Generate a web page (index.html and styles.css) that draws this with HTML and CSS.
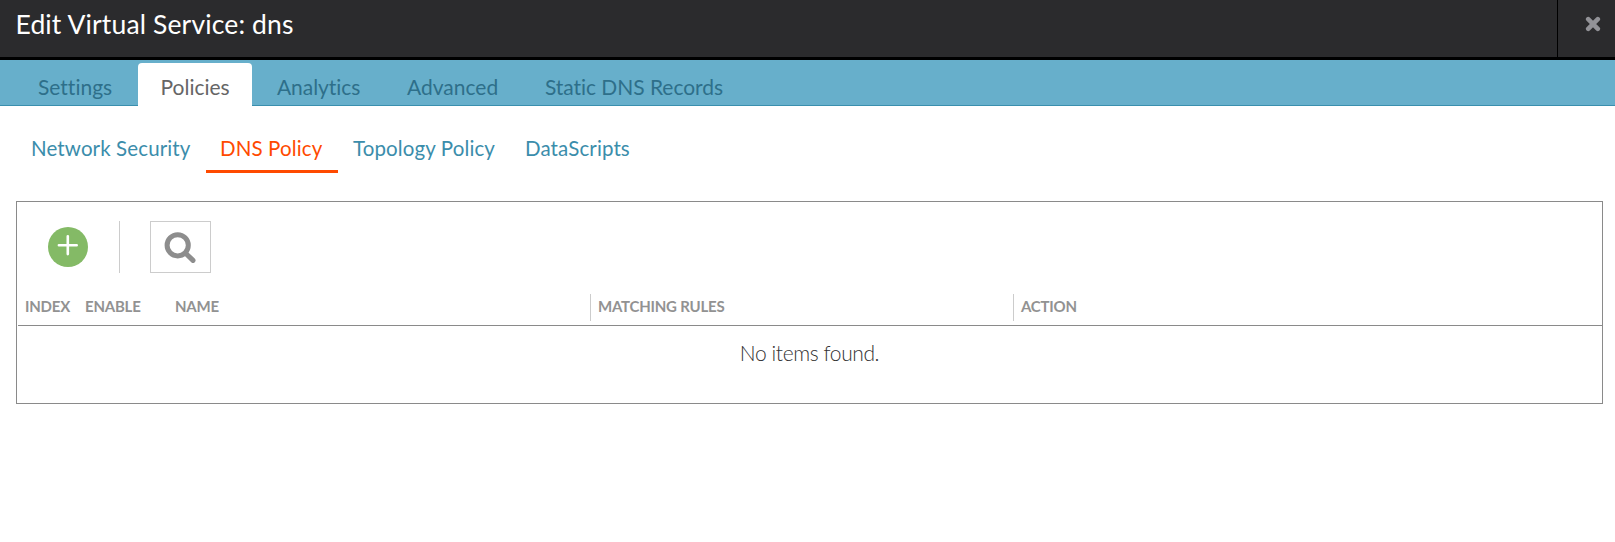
FILE: index.html
```html
<!DOCTYPE html>
<html lang="en">
<head>
<meta charset="utf-8">
<title>Edit Virtual Service: dns</title>
<link rel="stylesheet" href="styles.css">
</head>
<body>
<header class="header">
  <h1 class="title">Edit Virtual Service: dns</h1>
  <button class="close" aria-label="Close">
    <svg width="16" height="16" viewBox="0 0 16 16"><path d="M3.2 3.2 12.8 12.8M12.8 3.2 3.2 12.8"/></svg>
  </button>
</header>
<nav class="tabs">
  <a class="tab tab-settings">Settings</a>
  <a class="tab tab-policies active">Policies</a>
  <a class="tab tab-analytics">Analytics</a>
  <a class="tab tab-advanced">Advanced</a>
  <a class="tab tab-records">Static DNS Records</a>
</nav>
<nav class="subtabs">
  <a class="subtab sub-network">Network Security</a>
  <a class="subtab sub-dns current">DNS Policy</a>
  <a class="subtab sub-topology">Topology Policy</a>
  <a class="subtab sub-scripts">DataScripts</a>
</nav>
<main class="panel">
  <div class="toolbar">
    <button class="add" aria-label="Add">
      <svg width="40" height="40" viewBox="0 0 40 40"><path d="M10.9 18.2H28.7M19.8 9.3V27.1"/></svg>
    </button>
    <span class="divider"></span>
    <button class="search" aria-label="Search">
      <svg width="59" height="50" viewBox="0 0 59 50"><circle cx="26.7" cy="23.3" r="10.6"/><path d="M34.6 31.2 42 38.4"/></svg>
    </button>
  </div>
  <div class="row-head">
    <span class="col col-index">INDEX</span>
    <span class="col col-enable">ENABLE</span>
    <span class="col col-name">NAME</span>
    <span class="col col-rules">MATCHING RULES</span>
    <span class="col col-action">ACTION</span>
  </div>
  <div class="empty">No items found.</div>
</main>
</body>
</html>
```
FILE: styles.css
```css
* { box-sizing: border-box; }
body {
  margin: 0;
  background: #fff;
  font-family: Lato, "Liberation Sans", sans-serif;
  font-variant-ligatures: none;
}
button { padding: 0; border: 0; background: none; }
svg { display: block; fill: none; stroke-linecap: round; }
.header {
  display: flex;
  height: 60px;
  background: #2b2b2d;
  border-bottom: 3px solid #000;
}
.title {
  flex: 1;
  margin: 0;
  padding-left: 15.5px;
  font-size: 26.5px;
  font-weight: 400;
  letter-spacing: 0.14px;
  line-height: 49px;
  color: #fff;
  white-space: nowrap;
}
.close {
  width: 58px;
  padding: 16px 0 0 27px;
  border-left: 1px solid #000;
}
.close, .add, .search { display: flex; align-items: flex-start; }
.close svg { stroke: #929297; stroke-width: 4.6; stroke-linecap: square; stroke-linecap: round; }
.tabs {
  display: flex;
  height: 46px;
  padding: 3px 0 0 15px;
  background: linear-gradient(#3a8fae, #3a8fae) 0 100% / 100% 1px no-repeat #67afcb;
}
.tab {
  height: 43px;
  padding-left: 24px;
  border-radius: 4px 4px 0 0;
  font-size: 21px;
  line-height: 48px;
  color: #2e6f8a;
  white-space: nowrap;
}
.tab.active { background: #fff; color: #666; }
.tab-settings { width: 123px; padding-left: 23px; }
.tab-policies { width: 114px; padding-left: 22.5px; }
.tab-analytics { width: 131px; padding-left: 25px; letter-spacing: -0.05px; }
.tab-advanced { width: 138px; }
.tab-records { letter-spacing: -0.05px; }
.subtabs { display: flex; height: 95px; padding: 19px 0 0 16px; }
.subtab {
  height: 48px;
  padding-left: 15px;
  font-size: 20.5px;
  letter-spacing: 0.12px;
  line-height: 46px;
  color: #3b8dab;
  white-space: nowrap;
}
.subtab.current { color: #ff4a00; border-bottom: 3px solid #ff4a00; }
.sub-network { width: 190px; }
.sub-dns { width: 132px; padding-left: 14px; }
.sub-topology { width: 172px; }
.panel {
  width: 1587px;
  height: 203px;
  margin-left: 16px;
  border: 1px solid #8a8a8a;
}
.toolbar { display: flex; height: 92px; padding: 19px 0 0 31px; }
.add { width: 40px; height: 40px; margin-top: 6px; border-radius: 50%; background: #84ba66; }
.add svg { stroke: #fff; stroke-width: 2.6; }
.divider { width: 1px; height: 52px; margin-left: 31px; background: #ccc; }
.search { width: 61px; height: 52px; margin-left: 30px; border: 1px solid #ccc; }
.search svg { stroke: #8d8d8d; stroke-width: 5; }
.row-head {
  display: flex;
  height: 32px;
  margin-left: 1px;
  border-bottom: 1px solid #8a8a8a;
}
.col {
  height: 27px;
  padding-left: 7px;
  font-size: 15px;
  font-weight: 700;
  letter-spacing: -0.22px;
  line-height: 24px;
  color: #929292;
  white-space: nowrap;
}
.col-index { width: 59px; }
.col-enable { width: 90px; padding-left: 8px; }
.col-name { width: 423px; padding-left: 8px; }
.col-rules { width: 423px; border-left: 1px solid #ccc; }
.col-action { border-left: 1px solid #ccc; }
.empty {
  font-size: 21px;
  font-weight: 300;
  letter-spacing: -0.4px;
  line-height: 53px;
  text-align: center;
  color: #333;
}
```
